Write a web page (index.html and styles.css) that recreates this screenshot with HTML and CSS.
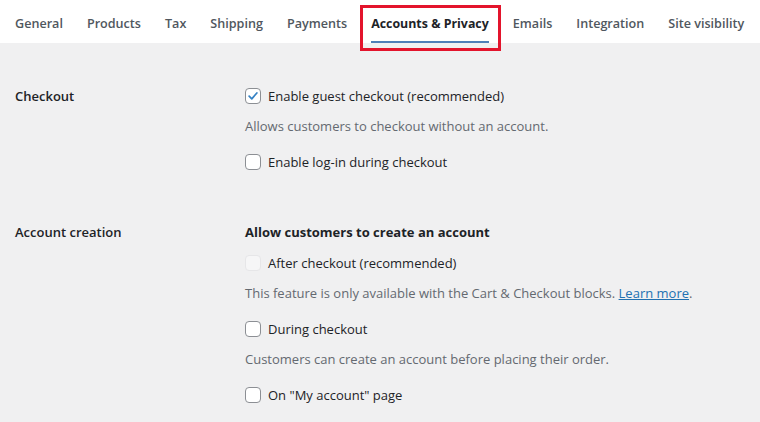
FILE: index.html
```html
<!DOCTYPE html>
<html>
<head>
<meta charset="utf-8">
<link rel="stylesheet" href="styles.css">
</head>
<body>
<nav class="tabs">
  <a class="tab">General</a>
  <a class="tab">Products</a>
  <a class="tab">Tax</a>
  <a class="tab">Shipping</a>
  <a class="tab">Payments</a>
  <a class="tab active">Accounts &amp; Privacy<span class="highlight"></span></a>
  <a class="tab">Emails</a>
  <a class="tab">Integration</a>
  <a class="tab">Site visibility</a>
</nav>
<main class="content">
  <section class="row">
    <div class="row-label">Checkout</div>
    <div class="row-field">
      <div class="option">
        <label class="check"><span class="box checked"><svg viewBox="0 0 16 16" width="16" height="16"><path d="M3.6 8.2 L6.6 11.2 L12.4 4.6" fill="none" stroke="#3582c4" stroke-width="2" stroke-linecap="round" stroke-linejoin="round"/></svg></span>Enable guest checkout (recommended)</label>
        <p class="desc">Allows customers to checkout without an account.</p>
      </div>
      <div class="option">
        <label class="check"><span class="box"></span>Enable log-in during checkout</label>
      </div>
    </div>
  </section>
  <section class="row second">
    <div class="row-label">Account creation</div>
    <div class="row-field">
      <div class="field-title">Allow customers to create an account</div>
      <div class="option">
        <label class="check"><span class="box disabled"></span>After checkout (recommended)</label>
        <p class="desc">This feature is only available with the Cart &amp; Checkout blocks. <a class="link">Learn more</a>.</p>
      </div>
      <div class="option">
        <label class="check"><span class="box"></span>During checkout</label>
        <p class="desc">Customers can create an account before placing their order.</p>
      </div>
      <div class="option">
        <label class="check"><span class="box"></span>On "My account" page</label>
      </div>
    </div>
  </section>
</main>
</body>
</html>
```
FILE: styles.css
```css
* { box-sizing: border-box; }
html, body { margin: 0; padding: 0; }
body {
  background: #f0f0f1;
  font-family: "Open Sans", "Noto Sans", sans-serif;
  font-size: 13px;
  color: #1d2327;
  width: 760px;
  height: 422px;
  overflow: hidden;
}
.tabs {
  display: flex;
  gap: 24px;
  height: 43px;
  background: #fff;
  padding-left: 15px;
  white-space: nowrap;
}
.tab {
  position: relative;
  display: flex;
  align-items: center;
  height: 43px;
  padding-top: 3px;
  font-size: 12.6px;
  font-weight: 600;
  color: #50575e;
}
.tab.active {
  color: #1d2327;
  font-size: 12.4px;
  font-weight: 700;
  border-bottom: 2px solid #4f7fb8;
  padding-top: 5px;
}
.highlight {
  position: absolute;
  left: -11px;
  right: -12px;
  top: 5px;
  bottom: -10px;
  border: 3px solid #e3142c;
}
.content { padding: 43px 0 0 15px; }
.row { display: flex; }
.row.second { margin-top: 50px; }
.row-label {
  width: 230px;
  flex: none;
  font-weight: 600;
  line-height: 20px;
}
.row-field { display: flex; flex-direction: column; gap: 16px; }
.field-title { font-weight: 700; line-height: 20px; margin-bottom: -5px; }
.check {
  display: flex;
  align-items: center;
  gap: 7px;
  line-height: 20px;
}
.box {
  width: 16px;
  height: 16px;
  border: 1px solid #8c8f94;
  border-radius: 4px;
  background: #fff;
  display: flex;
  align-items: center;
  justify-content: center;
  flex: none;
}
.box svg { display: block; }
.box.disabled { background: #f6f6f7; border-color: #e6e6e8; }
.desc {
  margin: 10px 0 0;
  line-height: 20px;
  color: #646970;
}
.link { color: #2271b1; text-decoration: underline; }
```
